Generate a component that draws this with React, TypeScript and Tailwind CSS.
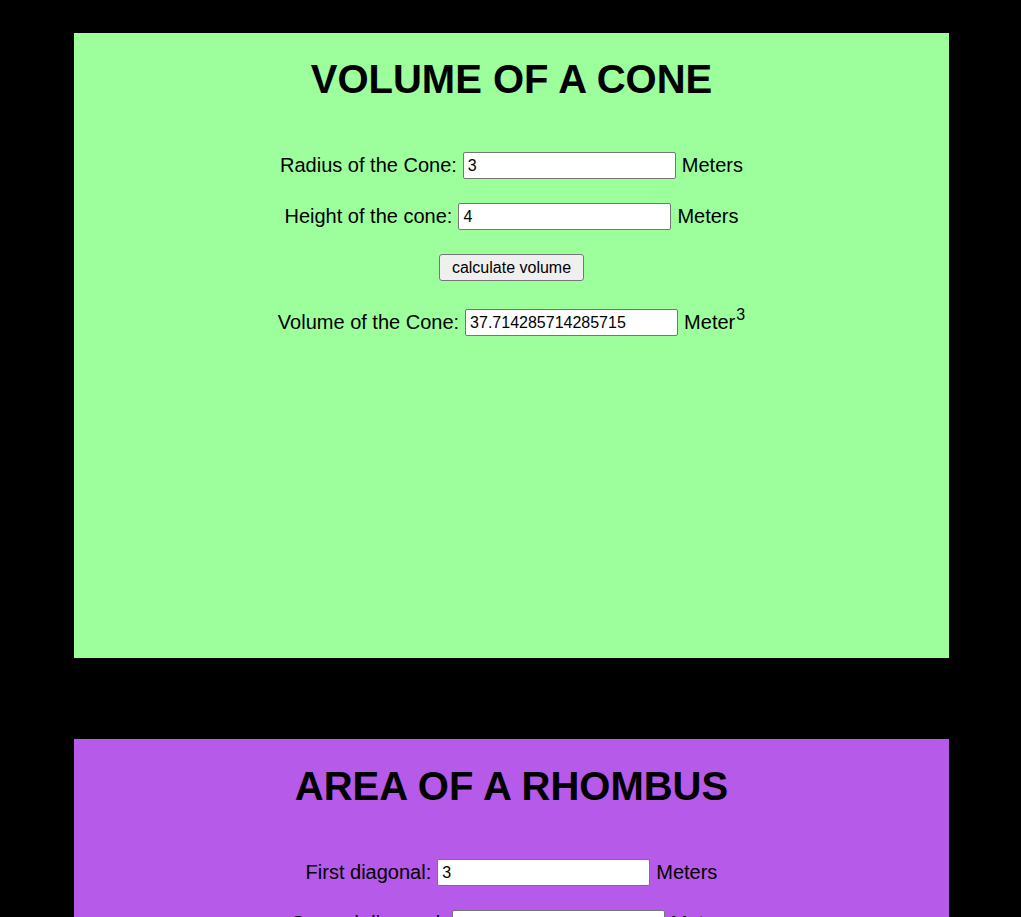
import React, { useState } from "react";

const font = { fontFamily: '"Liberation Sans", Arial, sans-serif' };

const Field: React.FC<{ label: string; value: string; unit: React.ReactNode; onChange?: (v: string) => void }> = ({
  label,
  value,
  unit,
  onChange,
}) => (
  <div className="flex h-[27px] items-center justify-center gap-[6px] text-[20px] text-black">
    <span className="relative -top-[1px]">{label}</span>
    <input
      className="w-[213px] h-[27px] border border-[#767676] rounded-[2px] bg-white px-[4px] text-[16px] text-black outline-none"
      value={value}
      onChange={(e) => onChange && onChange(e.target.value)}
    />
    <span className="relative -top-[1px]">{unit}</span>
  </div>
);

const App: React.FC = () => {
  const [radius, setRadius] = useState("3");
  const [height, setHeight] = useState("4");
  const [volume, setVolume] = useState("37.714285714285715");
  const [d1, setD1] = useState("3");
  const [d2, setD2] = useState("4");

  const calc = () => {
    const r = parseFloat(radius);
    const h = parseFloat(height);
    setVolume(String((1 / 3) * (22 / 7) * r * r * h));
  };

  return (
    <div className="min-h-[917px] bg-black pt-[33px] pb-[40px]" style={font}>
      {/* cone */}
      <div className="ml-[74px] w-[875px] h-[625px] bg-[#9dfe9c] pt-[26px] flex flex-col items-center">
        <h1 className="text-[40px] leading-none font-bold text-black mb-[53px]">VOLUME OF A CONE</h1>
        <div className="flex flex-col gap-[24px]">
          <Field label="Radius of the Cone:" value={radius} unit="Meters" onChange={setRadius} />
          <Field label="Height of the cone:" value={height} unit="Meters" onChange={setHeight} />
          <div className="flex justify-center">
            <button
              onClick={calc}
              className="h-[27px] px-[12px] bg-[#efefef] border border-[#767676] rounded-[3px] text-[16px] text-black"
            >
              calculate volume
            </button>
          </div>
          <div className="mt-[4px]">
            <Field
              label="Volume of the Cone:"
              value={volume}
              onChange={setVolume}
              unit={
                <>
                  Meter<sup className="text-[16px] relative -top-[9px] ml-[1px]">3</sup>
                </>
              }
            />
          </div>
        </div>
      </div>

      {/* rhombus */}
      <div className="ml-[74px] w-[875px] h-[625px] mt-[81px] bg-[#b65ae9] pt-[27px] flex flex-col items-center">
        <h1 className="text-[40px] leading-none font-bold text-black mb-[53px]">AREA OF A RHOMBUS</h1>
        <div className="flex flex-col gap-[24px]">
          <Field label="First diagonal:" value={d1} unit="Meters" onChange={setD1} />
          <Field label="Second diagonal:" value={d2} unit="Meters" onChange={setD2} />
        </div>
      </div>
    </div>
  );
};

export default App;
